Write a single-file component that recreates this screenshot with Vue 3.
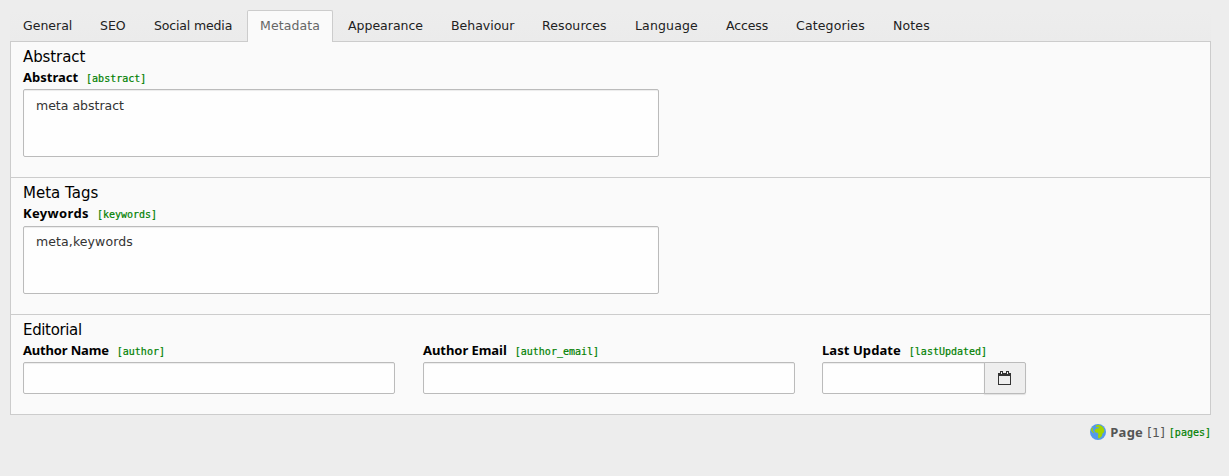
<script setup>
const tabs = [
  { label: 'General', width: 75 },
  { label: 'SEO', width: 52 },
  { label: 'Social media', width: 104, spacing: -0.15 },
  { label: 'Metadata', width: 86, spacing: 0.1, active: true },
  { label: 'Appearance', width: 101 },
  { label: 'Behaviour', width: 89 },
  { label: 'Resources', width: 91, spacing: 0.1 },
  { label: 'Language', width: 89, spacing: 0.15 },
  { label: 'Access', width: 68, spacing: -0.1 },
  { label: 'Categories', width: 95, spacing: 0.15 },
  { label: 'Notes', width: 64, spacing: 0.15 },
]
const areas = [
  { title: 'Abstract', label: 'Abstract', field: 'abstract', value: 'meta abstract' },
  { title: 'Meta Tags', label: 'Keywords', field: 'keywords', value: 'meta,keywords' },
]
</script>

<template>
  <main class="form">
    <nav class="tabs">
      <a v-for="t in tabs" :key="t.label" class="tab" :class="{ active: t.active }" :style="{ width: t.width + 'px', letterSpacing: (t.spacing || 0) + 'px' }">{{ t.label }}</a>
    </nav>
    <div class="panel">
      <section v-for="a in areas" :key="a.field" class="section" :class="a.field">
        <h4 class="title">{{ a.title }}</h4>
        <label class="label"><b>{{ a.label }}</b><code>[{{ a.field }}]</code></label>
        <div class="control area">{{ a.value }}</div>
      </section>
      <section class="section last">
        <h4 class="title">Editorial</h4>
        <div class="columns">
          <div class="column name">
            <label class="label"><b>Author Name</b><code>[author]</code></label>
            <div class="control input"></div>
          </div>
          <div class="column email">
            <label class="label"><b>Author Email</b><code>[author_email]</code></label>
            <div class="control input"></div>
          </div>
          <div class="column date">
            <label class="label"><b>Last Update</b><code>[lastUpdated]</code></label>
            <div class="group">
              <div class="control input"></div>
              <button class="button" type="button">
                <svg width="13" height="14" viewBox="0 0 13 14" shape-rendering="crispEdges">
                  <path fill="#333" fill-rule="evenodd" d="M0 2h2V0h3v2h3V0h3v2h2v12H0zM3 1v2h1V1zM9 1v2h1V1zM1 5v8h11V5z" />
                </svg>
              </button>
            </div>
          </div>
        </div>
      </section>
    </div>
    <footer class="footer">
      <svg class="globe" width="16" height="16" viewBox="0 0 16 16">
        <circle cx="8" cy="8" r="8" fill="#5499eb" />
        <path fill="#a4d400" d="M6 1.6 8 .8l3 .6 1.8 1.6 1 1.5.6 2.5-.8 1.8-1.3 1-.2 2-1.6 1.8-1.5.8-.8-.5-.2-2.4.5-1.4-.9-1.3-2-.3-.9-1.5.3-1.6 1.5-1 1.6.2.8-1-.8-.8-1.4.5-1-.5zM1.6 4l1-.5.4 1.2-.5 1.5 1 1.7.9.8-.6.6-1.7-1.2L1 6.3z" />
      </svg>
      <b>Page</b><span class="uid">[1]</span><code>[pages]</code>
    </footer>
  </main>
</template>

<style>
body { background: #ededed; }
</style>

<style scoped>
* { box-sizing: border-box; }
.form {
  height: 476px;
  padding: 10px 18px 0 10px;
  background: #ededed;
  font: 13px/18px "DejaVu Sans", Verdana, sans-serif;
  color: #333;
}
.tabs { display: flex; gap: 2px; height: 31px; background: linear-gradient(#ededed, #ebebeb); }
.tab {
  height: 31px;
  padding: 6px 0 0 12px;
  border: 1px solid transparent;
  border-bottom: 0;
  border-radius: 2px 2px 0 0;
  font-size: 12.5px;
  color: #212121;
  white-space: nowrap;
}
.tab.active { position: relative; z-index: 1; height: 32px; border-color: #ccc; background: #fafafa; color: #666; }
.panel { height: 374px; border: 1px solid #ccc; background: #fafafa; }
.section { height: 136px; padding: 5px 12px 0; border-bottom: 1px solid #ccc; }
.section + .section { height: 137px; }
.section.last { height: auto; border: 0; }
.title { margin: 0; height: 21px; font-size: 15px; line-height: 20px; font-weight: 400; color: #000; }
.last .title { letter-spacing: -0.35px; }
.abstract .title { letter-spacing: -0.1px; }
.label { display: flex; align-items: baseline; gap: 8px; height: 21px; line-height: 18px; color: #000; white-space: nowrap; }
.label b { font: 700 13px/18px "Noto Sans", sans-serif; }
.label code { font-size: 10px; }
.keywords .label b { letter-spacing: 0.35px; }
.name .label b { letter-spacing: -0.17px; }
.email .label b { letter-spacing: -0.05px; }
.date .label b { letter-spacing: 0.07px; }
code { font: 10px/18px "DejaVu Sans Mono", monospace; color: #008000; -webkit-text-stroke: 0.2px #008000; }
.control { border: 1px solid #bbb; border-radius: 2px; background: #fefefe; box-shadow: inset 0 1px 1px rgba(0, 0, 0, .075); }
.area { width: 636px; height: 68px; padding: 7px 12px; font-size: 12.5px; }
.keywords .area { margin-top: 1px; padding-top: 6px; letter-spacing: 0.1px; }
.input { width: 372px; height: 32px; }
.columns { display: flex; gap: 28px; }
.column { width: 372px; }
.date { margin-left: -1px; }
.group { display: flex; }
.date .input { width: 163px; border-radius: 2px 0 0 2px; }
.button { display: flex; align-items: center; justify-content: center; width: 42px; height: 32px; margin-left: -1px; padding: 0 1px 0 0; border: 1px solid #bbb; border-radius: 0 2px 2px 0; background: #eee; box-shadow: 0 1px 1px rgba(0, 0, 0, .1); }
.footer { display: flex; align-items: center; justify-content: flex-end; height: 18px; margin-top: 8px; color: #555; font-size: 12.5px; }
.footer b { margin-left: 4px; font: 700 13px/18px "Noto Sans", sans-serif; letter-spacing: 0.25px; }
.uid { margin: 0 4px; padding-top: 1px; }
.footer code { padding-top: 2px; }
</style>
